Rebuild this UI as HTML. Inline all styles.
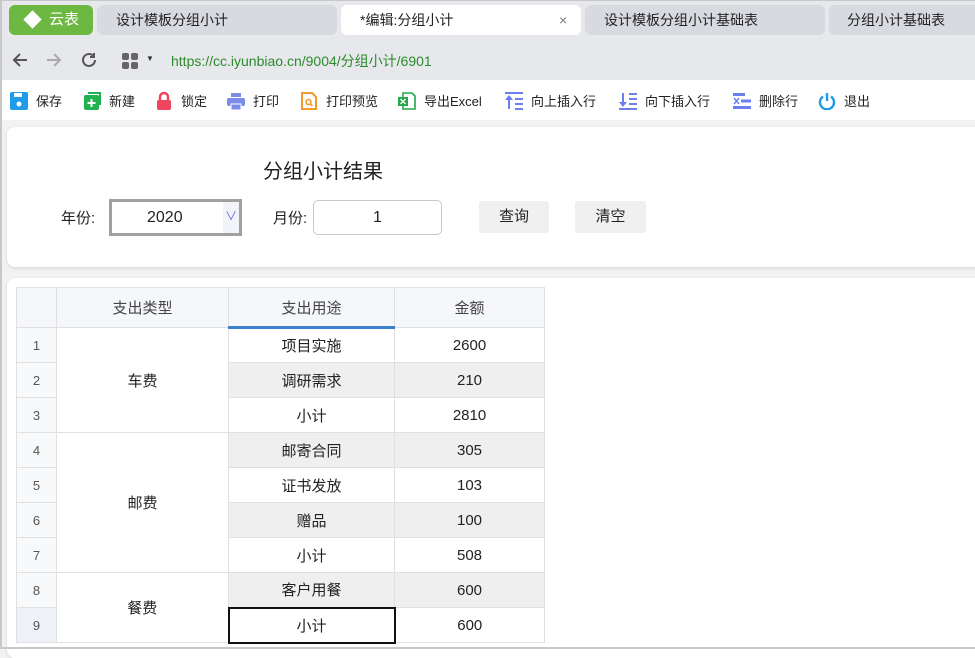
<!DOCTYPE html>
<html><head><meta charset="utf-8">
<style>
*{box-sizing:border-box;margin:0;padding:0}
body{width:975px;height:649px;overflow:hidden;background:#f2f2f2;font-family:"Liberation Sans","Noto Sans CJK SC",sans-serif;color:#222;position:relative}
.frame{position:absolute;left:0;top:0;width:975px;height:649px;border-left:2px solid #c8c8c8;border-bottom:2px solid #c8c8c8;border-top:1px solid #c8c8c8;pointer-events:none;z-index:10}
.top{position:absolute;left:0;top:0;width:975px;height:81px;background:#e7e8ec}
.tab{position:absolute;top:5px;height:30px;border-radius:6px;background:#d8dae0;font-size:14px;line-height:30px;color:#222}
.logo{position:absolute;left:9px;top:5px;width:84px;height:30px;border-radius:6px;background:#6cb842;color:#fff;font-size:15px;line-height:30px}
.tb{position:absolute;top:80px;left:0;width:975px;height:40px;background:#fff;font-size:13px}
.ti{position:absolute;top:12px;height:18px;line-height:18px;white-space:nowrap}
.ti svg{display:inline-block;width:18px;height:18px;vertical-align:-4px;margin-right:8px}
.card{position:absolute;background:#fff;border-radius:8px;box-shadow:0 1px 3px rgba(0,0,0,.12)}
table{border-collapse:collapse;position:absolute;left:16px;top:287px;font-size:15px}
td{border:1px solid #e0e0e0;height:35px;text-align:center;padding:0}
td.n{width:40px;background:#f8f9fb;font-size:13px;color:#555}
.h td{height:40px;background:#f5f7fa;color:#444}
.g{background:#efefef}
.btn{position:absolute;top:201px;height:32px;background:#f0f0f0;border-radius:3px;font-size:15px;line-height:32px;text-align:center}
</style></head><body>
<div class="top">
 <div class="logo"><span style="position:absolute;left:17px;top:8px;width:13px;height:13px;background:#fff;transform:rotate(45deg)"></span><span style="position:absolute;left:40px">云表</span></div>
 <div class="tab" style="left:97px;width:240px;padding-left:19px">设计模板分组小计</div>
 <div class="tab" style="left:341px;width:240px;background:#fff;padding-left:19px">*编辑:分组小计<span style="position:absolute;left:218px;color:#777">×</span></div>
 <div class="tab" style="left:585px;width:240px;padding-left:19px">设计模板分组小计基础表</div>
 <div class="tab" style="left:829px;width:160px;padding-left:18px">分组小计基础表</div>
 <svg style="position:absolute;left:11px;top:51px" width="18" height="18" viewBox="0 0 18 18" fill="none" stroke="#555" stroke-width="2"><path d="M16 9H3M9 3L3 9l6 6"/></svg>
 <svg style="position:absolute;left:45px;top:51px" width="18" height="18" viewBox="0 0 18 18" fill="none" stroke="#aaa" stroke-width="2"><path d="M2 9h13M9 3l6 6-6 6"/></svg>
 <svg style="position:absolute;left:80px;top:51px" width="18" height="18" viewBox="0 0 18 18" fill="none" stroke="#555" stroke-width="2"><path d="M15 9a6 6 0 1 1-2-4.5"/><path d="M14 2v4h-4" /></svg>
 <svg style="position:absolute;left:122px;top:53px" width="16" height="16"><rect x="0" y="0" width="7" height="7" rx="2" fill="#666"/><rect x="9" y="0" width="7" height="7" rx="2" fill="#666"/><rect x="0" y="9" width="7" height="7" rx="2" fill="#666"/><rect x="9" y="9" width="7" height="7" rx="2" fill="#666"/></svg>
 <div style="position:absolute;left:146px;top:54px;font-size:8px;color:#333">▼</div>
 <div style="position:absolute;left:171px;top:51px;font-size:14px;color:#2d8a2d">https://cc.iyunbiao.cn/9004/分组小计/6901</div>
</div>
<div class="tb">
 <div class="ti" style="left:10px"><svg viewBox="0 0 18 18"><rect x="0" y="0" width="18" height="18" rx="2" fill="#1e9be9"/><rect x="4" y="1" width="8" height="4" fill="#fff"/><circle cx="9" cy="12" r="2.5" fill="#fff"/></svg>保存</div>
 <div class="ti" style="left:83px"><svg viewBox="0 0 18 18"><rect x="1" y="3" width="15" height="15" rx="2" fill="#20b24f"/><path d="M5 1h12v12" fill="none" stroke="#20b24f" stroke-width="2"/><path d="M8.5 7v8M4.5 11h8" stroke="#fff" stroke-width="2"/></svg>新建</div>
 <div class="ti" style="left:155px"><svg viewBox="0 0 18 18"><path d="M5 8V5a4 4 0 0 1 8 0v3" fill="none" stroke="#f0455f" stroke-width="2.5"/><rect x="2" y="8" width="14" height="10" rx="2" fill="#f0455f"/></svg>锁定</div>
 <div class="ti" style="left:227px"><svg viewBox="0 0 18 18"><rect x="4" y="1" width="10" height="4" fill="#7b8de8"/><rect x="0" y="6" width="18" height="8" rx="2" fill="#7b8de8"/><rect x="4" y="12" width="10" height="6" fill="#7b8de8" stroke="#fff"/></svg>打印</div>
 <div class="ti" style="left:300px"><svg viewBox="0 0 18 18"><path d="M2 1h10l4 4v12H2z" fill="none" stroke="#f39a2b" stroke-width="2"/><circle cx="8.5" cy="10" r="2.5" fill="none" stroke="#f39a2b" stroke-width="1.6"/><path d="M10.5 12l2 2" stroke="#f39a2b" stroke-width="1.6"/></svg>打印预览</div>
 <div class="ti" style="left:398px"><svg viewBox="0 0 18 18"><path d="M5 1h9l3 3v13H5z" fill="none" stroke="#21a849" stroke-width="1.6"/><rect x="0" y="5" width="10" height="9" fill="#21a849"/><path d="M2.5 7l5 5M7.5 7l-5 5" stroke="#fff" stroke-width="1.4"/></svg>导出Excel</div>
 <div class="ti" style="left:505px"><svg viewBox="0 0 18 18" fill="#6c7ff0"><rect x="0" y="0" width="18" height="2"/><path d="M4 3l4 5H5v9H3V8H0z"/><rect x="10" y="6" width="8" height="2"/><rect x="10" y="11" width="8" height="2"/><rect x="10" y="16" width="8" height="2"/></svg>向上插入行</div>
 <div class="ti" style="left:619px"><svg viewBox="0 0 18 18" fill="#6c7ff0"><rect x="0" y="16" width="18" height="2"/><path d="M4 15l4-5H5V1H3v9H0z"/><rect x="10" y="1" width="8" height="2"/><rect x="10" y="6" width="8" height="2"/><rect x="10" y="11" width="8" height="2"/></svg>向下插入行</div>
 <div class="ti" style="left:733px"><svg viewBox="0 0 18 18" fill="#6c7ff0"><rect x="0" y="1" width="12" height="3"/><rect x="0" y="14" width="18" height="3"/><rect x="8" y="7.5" width="10" height="3"/><path d="M1 6l5 6M6 6l-5 6" stroke="#6c7ff0" stroke-width="1.5"/></svg>删除行</div>
 <div class="ti" style="left:818px"><svg viewBox="0 0 18 18" fill="none" stroke="#1e9be9" stroke-width="2.4"><path d="M5 4.5a7 7 0 1 0 8 0"/><path d="M9 1v8"/></svg>退出</div>
</div>
<div class="card" style="left:7px;top:127px;width:980px;height:140px"></div>
<div style="position:absolute;left:263px;top:155px;font-size:20px">分组小计结果</div>
<div style="position:absolute;left:61px;top:207px;font-size:15px">年份:</div>
<div style="position:absolute;left:109px;top:199px;width:133px;height:37px;border:3px solid #a0a0a0;font-size:16px;line-height:31px;padding-left:35px">2020<span style="position:absolute;right:0;top:0;width:16px;height:31px;background:#f3f4fa;color:#5b6fe0;font-size:12px;line-height:28px;text-align:center">∨</span></div>
<div style="position:absolute;left:273px;top:207px;font-size:15px">月份:</div>
<div style="position:absolute;left:313px;top:200px;width:129px;height:35px;border:1px solid #c8c8c8;border-radius:5px;font-size:16px;line-height:33px;text-align:center">1</div>
<div class="btn" style="left:479px;width:70px">查询</div>
<div class="btn" style="left:575px;width:71px">清空</div>
<div class="card" style="left:7px;top:278px;width:980px;height:380px"></div>
<table>
<tr class="h"><td class="n" style="background:#f5f7fa"></td><td style="width:172px">支出类型</td><td style="width:166px;border-bottom:3px solid #3f7fd0">支出用途</td><td style="width:150px">金额</td></tr>
<tr><td class="n">1</td><td rowspan="3" style="background:#fff">车费</td><td>项目实施</td><td>2600</td></tr>
<tr><td class="n">2</td><td class="g">调研需求</td><td class="g">210</td></tr>
<tr><td class="n">3</td><td>小计</td><td>2810</td></tr>
<tr><td class="n">4</td><td rowspan="4">邮费</td><td class="g">邮寄合同</td><td class="g">305</td></tr>
<tr><td class="n">5</td><td>证书发放</td><td>103</td></tr>
<tr><td class="n">6</td><td class="g">赠品</td><td class="g">100</td></tr>
<tr><td class="n">7</td><td>小计</td><td>508</td></tr>
<tr><td class="n">8</td><td rowspan="2">餐费</td><td class="g">客户用餐</td><td class="g">600</td></tr>
<tr><td class="n" style="background:#eef2f8">9</td><td style="border:2px solid #111">小计</td><td>600</td></tr>
</table>
<div class="frame"></div>
</body></html>
